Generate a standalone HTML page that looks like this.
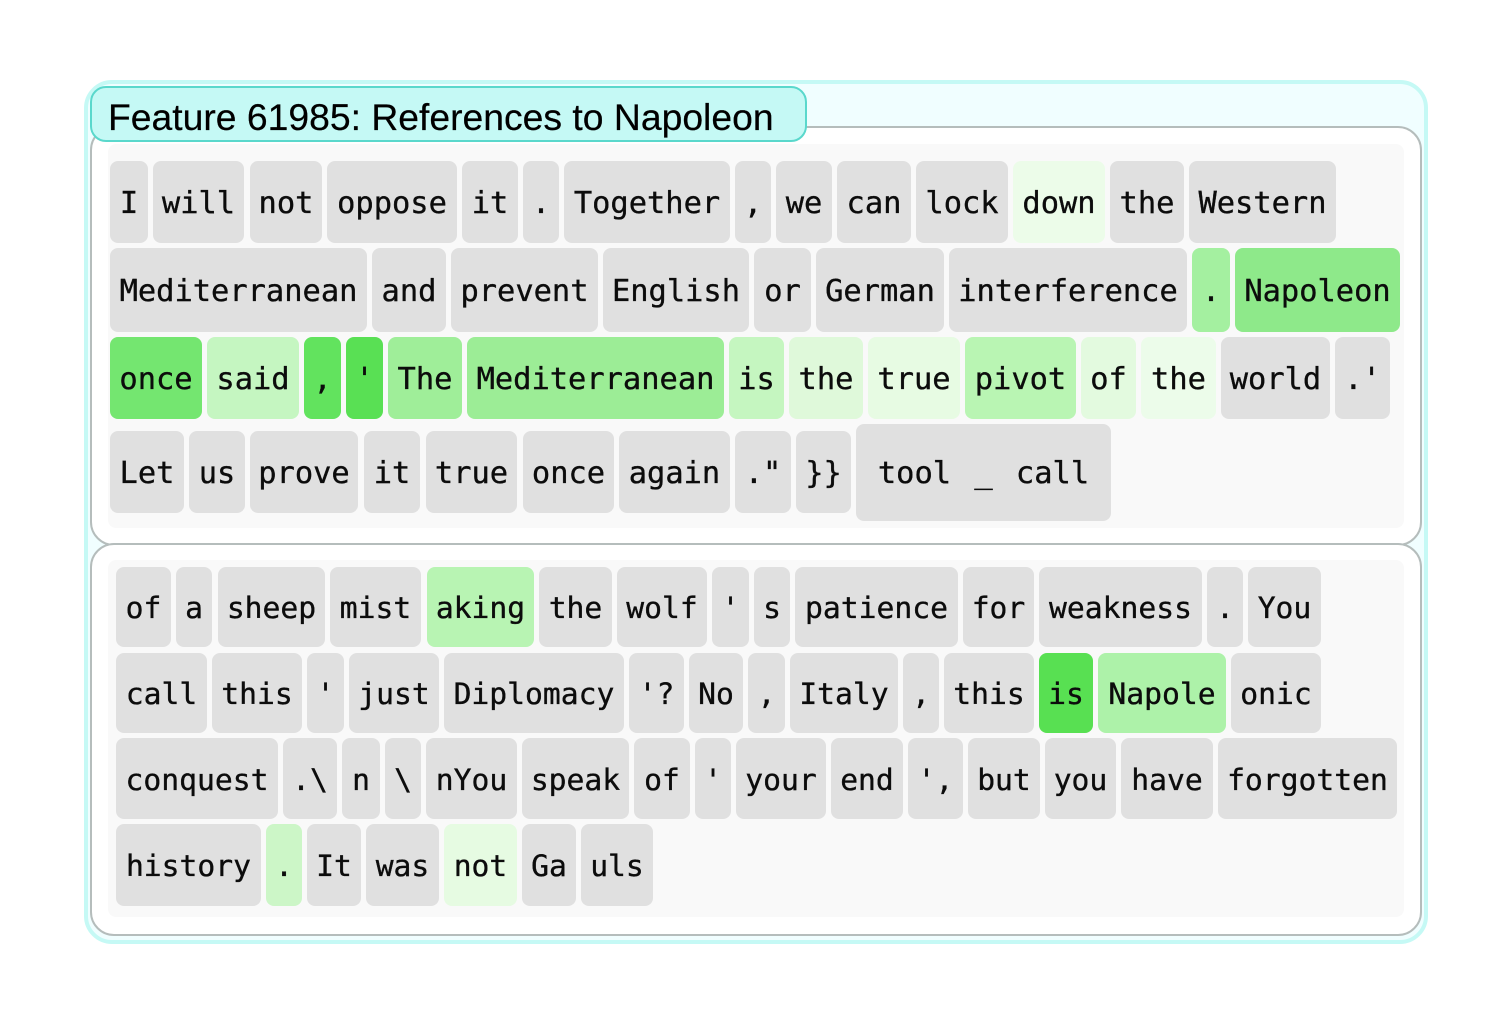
<!DOCTYPE html>
<html><head><meta charset="utf-8"><style>
html,body{margin:0;padding:0;background:#fff;width:1512px;height:1030px;overflow:hidden}
.b{position:absolute;box-sizing:border-box}
.t{position:absolute;box-sizing:border-box;padding-top:4px;display:flex;align-items:center;justify-content:center;white-space:pre;background:#e0e0e0;border-radius:8px;color:#0c0c0c;font-family:"DejaVu Sans Mono","Liberation Mono",monospace;font-size:30.4px;line-height:1;-webkit-text-stroke:0.35px #0c0c0c}
.s{font-size:29.7px}
</style></head><body>
<div style="position:absolute;left:0;top:0;width:1512px;height:1030px;filter:blur(0.35px)">
<div class="b" style="left:84px;top:80px;width:1344px;height:864px;background:#f0feff;border:4px solid #c5f9f5;border-radius:28px"></div>
<div class="b" style="left:90px;top:126px;width:1332px;height:420px;background:#fff;border:2px solid #b5bdbc;border-radius:24px"></div>
<div class="b" style="left:90px;top:543px;width:1332px;height:393px;background:#fff;border:2px solid #b5bdbc;border-radius:24px"></div>
<div class="b" style="left:90px;top:86px;width:717px;height:56px;background:#c5f9f5;border:2px solid #5ad8cc;border-radius:16px;font:37.3px/59px 'Liberation Sans',sans-serif;color:#000;padding-left:16px;white-space:nowrap;-webkit-text-stroke:0.2px #000">Feature 61985: References to Napoleon</div>
<div class="b" style="left:108px;top:144px;width:1296px;height:384px;background:#f9f9f9;border-radius:8px"></div>
<div class="b" style="left:108px;top:560px;width:1296px;height:357px;background:#f9f9f9;border-radius:8px"></div>

<span class="t" style="left:110px;top:161px;width:38px;height:82px">I</span>
<span class="t" style="left:153px;top:161px;width:91px;height:82px">will</span>
<span class="t" style="left:250px;top:161px;width:72px;height:82px">not</span>
<span class="t" style="left:327px;top:161px;width:130px;height:82px">oppose</span>
<span class="t" style="left:462px;top:161px;width:56px;height:82px">it</span>
<span class="t" style="left:523px;top:161px;width:36px;height:82px">.</span>
<span class="t" style="left:564px;top:161px;width:166px;height:82px">Together</span>
<span class="t" style="left:735px;top:161px;width:36px;height:82px">,</span>
<span class="t" style="left:776px;top:161px;width:56px;height:82px">we</span>
<span class="t" style="left:837px;top:161px;width:74px;height:82px">can</span>
<span class="t" style="left:916px;top:161px;width:92px;height:82px">lock</span>
<span class="t" style="left:1013px;top:161px;width:92px;height:82px;background:#ecfce9">down</span>
<span class="t" style="left:1110px;top:161px;width:74px;height:82px">the</span>
<span class="t" style="left:1189px;top:161px;width:147px;height:82px">Western</span>

<span class="t" style="left:110px;top:248px;width:257px;height:84px">Mediterranean</span>
<span class="t" style="left:372px;top:248px;width:74px;height:84px">and</span>
<span class="t" style="left:451px;top:248px;width:147px;height:84px">prevent</span>
<span class="t" style="left:603px;top:248px;width:146px;height:84px">English</span>
<span class="t" style="left:754px;top:248px;width:57px;height:84px">or</span>
<span class="t" style="left:816px;top:248px;width:128px;height:84px">German</span>
<span class="t" style="left:949px;top:248px;width:238px;height:84px">interference</span>
<span class="t" style="left:1192px;top:248px;width:38px;height:84px;background:#a4f0a0">.</span>
<span class="t" style="left:1235px;top:248px;width:165px;height:84px;background:#8ee98a">Napoleon</span>

<span class="t" style="left:110px;top:337px;width:92px;height:82px;background:#74e670">once</span>
<span class="t" style="left:207px;top:337px;width:92px;height:82px;background:#c5f6c1">said</span>
<span class="t" style="left:304px;top:337px;width:37px;height:82px;background:#62e35e">,</span>
<span class="t" style="left:346px;top:337px;width:37px;height:82px;background:#59e054">'</span>
<span class="t" style="left:388px;top:337px;width:74px;height:82px;background:#9fee99">The</span>
<span class="t" style="left:467px;top:337px;width:257px;height:82px;background:#9ced96">Mediterranean</span>
<span class="t" style="left:729px;top:337px;width:55px;height:82px;background:#c5f6c0">is</span>
<span class="t" style="left:789px;top:337px;width:74px;height:82px;background:#dff9da">the</span>
<span class="t" style="left:868px;top:337px;width:92px;height:82px;background:#e7fbe3">true</span>
<span class="t" style="left:965px;top:337px;width:111px;height:82px;background:#b9f5b3">pivot</span>
<span class="t" style="left:1081px;top:337px;width:55px;height:82px;background:#e3fadf">of</span>
<span class="t" style="left:1141px;top:337px;width:75px;height:82px;background:#ecfcea">the</span>
<span class="t" style="left:1221px;top:337px;width:109px;height:82px">world</span>
<span class="t" style="left:1335px;top:337px;width:55px;height:82px">.'</span>

<span class="t" style="left:110px;top:431px;width:74px;height:82px">Let</span>
<span class="t" style="left:189px;top:431px;width:56px;height:82px">us</span>
<span class="t" style="left:250px;top:431px;width:108px;height:82px">prove</span>
<span class="t" style="left:364px;top:431px;width:56px;height:82px">it</span>
<span class="t" style="left:426px;top:431px;width:91px;height:82px">true</span>
<span class="t" style="left:523px;top:431px;width:91px;height:82px">once</span>
<span class="t" style="left:619px;top:431px;width:111px;height:82px">again</span>
<span class="t" style="left:735px;top:431px;width:56px;height:82px">."</span>
<span class="t" style="left:796px;top:431px;width:55px;height:82px">}}</span>
<span class="t" style="left:856px;top:424px;width:255px;height:97px;word-spacing:5px">tool _ call</span>

<span class="t s" style="left:116px;top:567px;width:55px;height:80px">of</span>
<span class="t s" style="left:176px;top:567px;width:36px;height:80px">a</span>
<span class="t s" style="left:218px;top:567px;width:107px;height:80px">sheep</span>
<span class="t s" style="left:330px;top:567px;width:91px;height:80px">mist</span>
<span class="t s" style="left:427px;top:567px;width:107px;height:80px;background:#b8f4b3">aking</span>
<span class="t s" style="left:539px;top:567px;width:73px;height:80px">the</span>
<span class="t s" style="left:617px;top:567px;width:90px;height:80px">wolf</span>
<span class="t s" style="left:712px;top:567px;width:37px;height:80px">'</span>
<span class="t s" style="left:754px;top:567px;width:36px;height:80px">s</span>
<span class="t s" style="left:795px;top:567px;width:163px;height:80px">patience</span>
<span class="t s" style="left:963px;top:567px;width:71px;height:80px">for</span>
<span class="t s" style="left:1039px;top:567px;width:163px;height:80px">weakness</span>
<span class="t s" style="left:1207px;top:567px;width:36px;height:80px">.</span>
<span class="t s" style="left:1248px;top:567px;width:73px;height:80px">You</span>

<span class="t s" style="left:116px;top:653px;width:91px;height:80px">call</span>
<span class="t s" style="left:212px;top:653px;width:90px;height:80px">this</span>
<span class="t s" style="left:307px;top:653px;width:37px;height:80px">'</span>
<span class="t s" style="left:349px;top:653px;width:90px;height:80px">just</span>
<span class="t s" style="left:444px;top:653px;width:180px;height:80px">Diplomacy</span>
<span class="t s" style="left:629px;top:653px;width:55px;height:80px">'?</span>
<span class="t s" style="left:689px;top:653px;width:54px;height:80px">No</span>
<span class="t s" style="left:748px;top:653px;width:37px;height:80px">,</span>
<span class="t s" style="left:790px;top:653px;width:108px;height:80px">Italy</span>
<span class="t s" style="left:903px;top:653px;width:36px;height:80px">,</span>
<span class="t s" style="left:944px;top:653px;width:90px;height:80px">this</span>
<span class="t s" style="left:1039px;top:653px;width:54px;height:80px;background:#58e052">is</span>
<span class="t s" style="left:1098px;top:653px;width:128px;height:80px;background:#adf2a9">Napole</span>
<span class="t s" style="left:1231px;top:653px;width:90px;height:80px">onic</span>

<span class="t s" style="left:116px;top:738px;width:162px;height:81px">conquest</span>
<span class="t s" style="left:283px;top:738px;width:54px;height:81px">.\</span>
<span class="t s" style="left:342px;top:738px;width:38px;height:81px">n</span>
<span class="t s" style="left:385px;top:738px;width:36px;height:81px">\</span>
<span class="t s" style="left:426px;top:738px;width:91px;height:81px">nYou</span>
<span class="t s" style="left:522px;top:738px;width:107px;height:81px">speak</span>
<span class="t s" style="left:634px;top:738px;width:56px;height:81px">of</span>
<span class="t s" style="left:695px;top:738px;width:36px;height:81px">'</span>
<span class="t s" style="left:736px;top:738px;width:90px;height:81px">your</span>
<span class="t s" style="left:831px;top:738px;width:72px;height:81px">end</span>
<span class="t s" style="left:908px;top:738px;width:55px;height:81px">',</span>
<span class="t s" style="left:968px;top:738px;width:72px;height:81px">but</span>
<span class="t s" style="left:1045px;top:738px;width:71px;height:81px">you</span>
<span class="t s" style="left:1121px;top:738px;width:92px;height:81px">have</span>
<span class="t s" style="left:1218px;top:738px;width:179px;height:81px">forgotten</span>

<span class="t s" style="left:116px;top:824px;width:145px;height:82px">history</span>
<span class="t s" style="left:266px;top:824px;width:36px;height:82px;background:#ccf6c7">.</span>
<span class="t s" style="left:307px;top:824px;width:54px;height:82px">It</span>
<span class="t s" style="left:366px;top:824px;width:73px;height:82px">was</span>
<span class="t s" style="left:444px;top:824px;width:73px;height:82px;background:#e6fbe2">not</span>
<span class="t s" style="left:522px;top:824px;width:54px;height:82px">Ga</span>
<span class="t s" style="left:581px;top:824px;width:72px;height:82px">uls</span>
</div>
</body></html>
